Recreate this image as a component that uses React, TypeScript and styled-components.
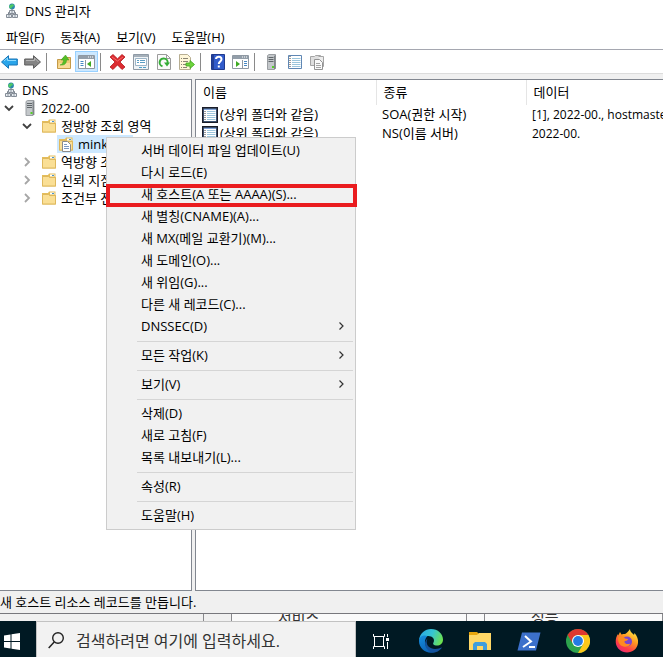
import React from "react";
import styled, { createGlobalStyle } from "styled-components";

const FONT = '"Open Sans", "Noto Sans CJK KR", sans-serif';

const GlobalStyle = createGlobalStyle`
  * { box-sizing: border-box; }
  body { margin: 0; background: #fff; }
  button, input { font: inherit; color: inherit; }
`;

const Screen = styled.div`
  position: relative;
  display: flex;
  flex-direction: column;
  min-height: 100vh;
  overflow: hidden;
  font-family: ${FONT};
  font-size: 13px;
  line-height: 18px;
  color: #000;
  white-space: nowrap;
`;

const TitleBar = styled.header`
  display: flex;
  align-items: center;
  gap: 6px;
  height: 24px;
  padding: 0 0 2px 5px;
`;

const Title = styled.h1`
  margin: 0;
  font-size: 13px;
  font-weight: 400;
`;

const MenuBar = styled.nav`
  display: flex;
  gap: 16px;
  height: 26px;
  padding: 0 6px;
  border-bottom: 1px solid #a5a7b0;
`;

const MenuBarItem = styled.button`
  padding: 0;
  border: 0;
  background: none;
`;

const Toolbar = styled.div`
  display: flex;
  align-items: center;
  height: 24px;
  margin-left: -2px;
  border-bottom: 1px solid #dcdcdc;
`;

const ToolButton = styled.button<{ $active?: boolean }>`
  display: flex;
  align-items: center;
  justify-content: center;
  width: 23px;
  height: 21px;
  padding: 0;
  border: 1px solid ${(p) => (p.$active ? "#99d1ff" : "transparent")};
  background: ${(p) => (p.$active ? "#cce8ff" : "none")};
`;

const ToolDivider = styled.span`
  width: 1px;
  height: 18px;
  margin: 0 5px 0 2px;
  background: #8a8a8a;
`;

const Workspace = styled.main`
  display: flex;
  flex: 1;
  gap: 3px;
  padding: 5px 0 0;
  background: #f0f0f0;
`;

const Pane = styled.section<{ $grow?: boolean }>`
  flex: ${(p) => (p.$grow ? "1" : "0 0 192px")};
  min-width: 0;
  overflow: hidden;
  border: 1px solid #828790;
  border-left-width: ${(p) => (p.$grow ? "1px" : "0")};
  border-right-width: ${(p) => (p.$grow ? "0" : "1px")};
  background: #fff;
`;

const Tree = styled.ul`
  margin: 0;
  padding: 1px 0 0 3px;
  list-style: none;
`;

const TreeRow = styled.li<{ $level: number }>`
  display: flex;
  align-items: center;
  height: 18px;
  padding-left: ${(p) => p.$level * 18}px;
`;

const Expander = styled.button`
  display: flex;
  align-items: center;
  width: 19px;
  height: 18px;
  padding: 0 0 0 1px;
  border: 0;
  background: none;
`;

const TreeLabel = styled.span<{ $selected?: boolean }>`
  display: flex;
  align-items: center;
  gap: 4px;
  height: 18px;
  padding: 0 ${(p) => (p.$selected ? "25px" : "2px")} 0 1px;
  background: ${(p) => (p.$selected ? "#cce8ff" : "none")};
`;

const RecordTable = styled.table`
  width: 100%;
  table-layout: fixed;
  border-collapse: collapse;
`;

const HeadCell = styled.th<{ $width?: number }>`
  width: ${(p) => (p.$width ? `${p.$width}px` : "auto")};
  height: 25px;
  padding: 0 7px 2px;
  border-right: ${(p) => (p.$width ? "1px solid #e5e5e5" : "0")};
  font-weight: 400;
  text-align: left;
`;

const Cell = styled.td<{ $small?: boolean }>`
  height: 19px;
  padding: 0 0 0 6px;
  font-size: ${(p) => (p.$small ? "12px" : "13px")};
  line-height: 19px;
`;

const NameCell = styled.div`
  display: flex;
  align-items: center;
  gap: 2px;
  height: 19px;
`;

const StatusBar = styled.footer`
  height: 23px;
  padding-top: 2px;
  border-bottom: 1px solid #77777c;
  background: #f0f0f0;
`;

const Backdrop = styled.div`
  display: grid;
  grid-template-columns: 204px 28px 235px 18px 1fr;
  height: 7px;
  overflow: hidden;
  background: #fafafa;
  font-size: 15px;
  line-height: 7px;
  color: #333;
`;

const BackdropCell = styled.div<{ $shade?: boolean }>`
  border-right: 1px solid #88888c;
  background: ${(p) => (p.$shade ? "#f0f0f0" : "none")};
`;

const BackdropText = styled.span`
  margin-left: 46px;
`;

const Taskbar = styled.div`
  display: flex;
  height: 36px;
  background: #001923;
`;

const StartButton = styled.button`
  display: flex;
  align-items: center;
  width: 36px;
  padding: 4px 0 0 4px;
  border: 0;
  background: none;
`;

const SearchBox = styled.label`
  display: flex;
  align-items: center;
  gap: 12px;
  flex: 0 0 320px;
  padding: 2px 12px 0 11px;
  border: 1px solid #c2c2c2;
  border-bottom: 0;
  background: #f2f2f2;
`;

const SearchInput = styled.input`
  flex: 1;
  min-width: 0;
  padding: 0;
  border: 0;
  outline: 0;
  background: none;
  font-size: 16px;
  line-height: 24px;
  &::placeholder { color: #333; opacity: 1; }
`;

const TaskButton = styled.button`
  display: flex;
  align-items: center;
  justify-content: center;
  width: 49px;
  padding: 4px 0 0 2px;
  border: 0;
  background: none;
`;

const ContextMenu = styled.div`
  position: absolute;
  top: 137px;
  left: 106px;
  width: 250px;
  padding: 2px 0;
  border: 1px solid #ccc;
  background: #f1f1f1;
`;

const ContextItem = styled.button<{ $marked?: boolean }>`
  position: relative;
  display: flex;
  align-items: center;
  justify-content: space-between;
  width: 100%;
  height: 22px;
  padding: 0 10px 2px 34px;
  border: 0;
  background: none;
  ${(p) =>
    p.$marked &&
    `&::after {
      content: "";
      position: absolute;
      inset: 0 -2px -1px -1px;
      border: 4px solid #ea1c1f;
    }`}
`;

const ContextDivider = styled.hr`
  height: 1px;
  margin: 3px 2px 3px 30px;
  border: 0;
  background: #d5d5d5;
`;

const DnsIcon = () => (
  <svg width="14" height="16" viewBox="0 0 14 16">
    <circle cx="7" cy="3.5" r="2.9" fill="#2b87ad" />
    <path d="M5 2l3-1 1 2-2 1-1 2-2-2z" fill="#4fca63" />
    <path d="M7 6v5M3.500 12V9.500h7V12" stroke="#78818c" fill="none" />
    <path d="M4.500 7.500h5v3h-5zM1.500 11.500h5v3h-5zM7.500 11.500h5v3h-5z" fill="#e6ebf0" stroke="#858d97" />
    <path d="M6 9h2M3 13h2M9 13h2" stroke="#8f98a1" />
  </svg>
);

const ServerIcon = ({ wide = false }: { wide?: boolean }) => (
  <svg width={wide ? 14 : 9} height="16" viewBox="0 0 9 16">
    <path d="M.5 1.500L2 .5h6.500v14l-1 1h-7z" fill="#c3c7ca" stroke="#9a9ea2" />
    <path d="M7 2v13h1.500V1z" fill="#7f8488" />
    <path d="M1.500 3.500h5M1.500 5.500h5M1.500 7.500h5" stroke="#5f6569" />
    <path d="M5 12h2v2H5z" fill="#55cf27" />
  </svg>
);

const FolderIcon = ({ page = false }: { page?: boolean }) => (
  <svg width="16" height="16" viewBox="0 0 16 16">
    <path d="M1 3h6l1-1.500h6.500V5H15v9.500H1z" fill="#e4bd5b" />
    <path d="M9 2.500h4.500v2H9z" fill="#fff" />
    <path d="M11 3h2v1h-2z" fill="#4795d2" />
    <path d="M1.500 4.500h6l1 1h6v8.500h-13z" fill="#fadf95" stroke="#dfb85c" />
    {page && (
      <>
        <path d="M4.500 5.500h5l3 3v7h-8z" fill="#fff" stroke="#8b8b8b" />
        <path d="M6 8.500h3M6 10.500h5M6 12.500h5" stroke="#7d99bf" />
      </>
    )}
  </svg>
);

const NotebookIcon = ({ framed = false }: { framed?: boolean }) => (
  <svg width="16" height="16" viewBox="0 0 16 16">
    <path d="M1.500 1.500h13v13h-13z" fill="#fff" stroke="#5f87b4" />
    <path d="M5 4.500h8.500M5 6.500h8.500M5 8.500h8.500M5 10.500h8.500M5 12.500h8.500" stroke="#9cc6dc" />
    <path d="M3 2v12" stroke="#9a9a9a" strokeWidth="2" strokeDasharray="1 1" />
    {framed && <path d="M.75 .75h14.500v14.500H.75z" fill="none" stroke="#1a1c28" strokeWidth="1.500" />}
    {framed && <path d="M2 2.500h12" stroke="#83a3d9" />}
  </svg>
);

const Chevron = ({ open = false }: { open?: boolean }) => (
  <svg width="10" height="10" viewBox="0 0 10 10">
    <path
      d={open ? "M1 3l4 4 4-4" : "M3 1l4 4-4 4"}
      fill="none"
      stroke={open ? "#404040" : "#a6a6a6"}
      strokeWidth="1.800"
    />
  </svg>
);

const SubmenuArrow = () => (
  <svg width="8" height="8" viewBox="0 0 8 8">
    <path d="M2.500 .5L6 4 2.500 7.500" fill="none" stroke="#333" strokeWidth="1.200" />
  </svg>
);

const Arrow = ({ forward = false }: { forward?: boolean }) => (
  <svg width="17" height="14" viewBox="0 0 17 14">
    <path
      d={forward ? "M16.500 7L9.500 .7V4H.7v6h8.800v3.300z" : "M.5 7l7-6.300V4h8.800v6H7.500v3.300z"}
      fill={forward ? "#858585" : "#2aa5ea"}
      stroke={forward ? "#5d5d5d" : "#1775b7"}
    />
    <path d={forward ? "M2 5.500h8.500V3l4 4" : "M3 6l3.500-3v2.500H15"} fill="none" stroke={forward ? "#b6b6b6" : "#8fdcff"} />
  </svg>
);

const UpFolderIcon = () => (
  <svg width="16" height="16" viewBox="0 0 16 16">
    <path d="M1.500 5.500h5l1-2h7v11h-13z" fill="#f0cb78" stroke="#c49a48" />
    <path d="M2 14l1-5h11v5z" fill="#f9dc98" />
    <path d="M4 11C6.500 10 7.500 8.500 7.500 6H5l4.500-5L13 6h-2.500c0 4-2.500 5.500-6.500 5z" fill="#55be26" stroke="#3c9a1c" strokeWidth=".5" />
  </svg>
);

const TreePanelIcon = ({ right = false }: { right?: boolean }) => (
  <svg width="17" height="14" viewBox="0 0 17 14">
    <path d="M.5 .5h16v13H.5z" fill="#fff" stroke="#8f99a3" />
    <path d="M1 1h15v3H1z" fill="#939ea9" />
    <path d="M10 2h1M12 2h1M14 2h1" stroke="#fff" />
    <path d={right ? "M10.500 5v8" : "M7.500 5v8"} stroke="#8f99a3" />
    <path d={right ? "M12 6.500h3M12 8.500h3M12 10.500h3" : "M2.500 6.500h3M2.500 8.500h3M2.500 10.500h3"} stroke="#4789c4" />
    <path d={right ? "M4 6l4 3-4 3z" : "M13 6L9 9l4 3z"} fill="#3daa22" />
  </svg>
);

const DeleteIcon = () => (
  <svg width="17" height="16" viewBox="0 0 17 16">
    <path
      d="M1 3l3-2.500 4.500 4.300L13 .5 16 3l-5 5 5 5-3 2.500-4.500-4.600L4 15.500 1 13l5-5z"
      fill="#dd2c31"
      stroke="#b31c20"
      strokeWidth=".8"
    />
    <path d="M3 3l5.500 4L14 3" stroke="#f36d6b" fill="none" />
  </svg>
);

const PropertiesIcon = () => (
  <svg width="16" height="16" viewBox="0 0 16 16">
    <path d="M.5 .5h15v15H.5z" fill="#eff3f6" stroke="#8f9aa5" />
    <path d="M1 1h14v2H1z" fill="#a5b0ba" />
    <path d="M2.500 4.500h11v7h-11z" fill="#fff" stroke="#9db5c7" />
    <path d="M4 6.500h2M7 6.500h5M4 8.500h2M7 8.500h5" stroke="#5a9dc4" />
    <path d="M6 13.500h3M10 13.500h3" stroke="#4ca0cb" />
  </svg>
);

const RefreshIcon = () => (
  <svg width="14" height="16" viewBox="0 0 14 16">
    <path d="M.5.5h9l4 4v11H.5z" fill="#fbfbfb" stroke="#9b9b9b" />
    <path d="M9.500.5v4h4" fill="none" stroke="#9b9b9b" />
    <path d="M5.500 12.300A4 4 0 1 1 10.500 9.500" fill="none" stroke="#35ad37" strokeWidth="2" />
    <path d="M7 8.500h6l-3 4z" fill="#35ad37" />
  </svg>
);

const ExportIcon = () => (
  <svg width="17" height="16" viewBox="0 0 17 16">
    <path d="M1.500.5h8l3 3v12h-11z" fill="#fff7d9" stroke="#b7ae92" />
    <path d="M3 4.500h1M5 4.500h5M3 7.500h1M5 7.500h5M3 10.500h1M5 10.500h4M3 13.500h1M5 13.500h4" stroke="#8a8473" />
    <path d="M8 9h4V6.500l4.500 4-4.500 4V12H8z" fill="#6ed53c" stroke="#3fa51f" strokeWidth=".8" />
  </svg>
);

const HelpIcon = () => (
  <svg width="14" height="16" viewBox="0 0 14 16">
    <path d="M.5.5h13v15H.5z" fill="#315bcb" stroke="#203a8e" />
    <path d="M1 1h2v14H1z" fill="#233f97" />
    <path d="M5 5c0-3 5.500-3 5.500.2C10.500 7.500 7.800 7.500 7.800 10" fill="none" stroke="#fff" strokeWidth="2" />
    <path d="M6.800 11.500h2v2h-2z" fill="#fff" />
  </svg>
);

const CopyIcon = () => (
  <svg width="15" height="16" viewBox="0 0 15 16">
    <path d="M.5 2.500h4l1-1h5v10H.5z" fill="#dedede" stroke="#a5a5a5" />
    <path d="M8.500 2.500h5v10h-3" fill="#ededed" stroke="#a5a5a5" />
    <path d="M4.500 5.500h5l3 3v7h-8z" fill="#fafafa" stroke="#929292" />
    <path d="M6 9.500h4M6 11.500h5M6 13.500h5" stroke="#a5a5a5" />
  </svg>
);

const WindowsIcon = () => (
  <svg width="16" height="17" viewBox="0 0 16 17">
    <path d="M0 2.500l6.500-1V8H0zM7.500 1.300L16 0v8H7.500zM0 9h6.500v6.500l-6.500-1zM7.500 9H16v8l-8.500-1.300z" fill="#fff" />
  </svg>
);

const SearchIcon = () => (
  <svg width="16" height="17" viewBox="0 0 16 17">
    <circle cx="10" cy="6" r="5.300" fill="none" stroke="#222" strokeWidth="1.400" />
    <path d="M6.200 10L.7 16" stroke="#222" strokeWidth="1.500" />
  </svg>
);

const TaskViewIcon = () => (
  <svg width="17" height="17" viewBox="0 0 17 17">
    <path d="M.5 1v2.500h11V1M.5 16v-2.500h11V16M1.500 3.500v10M10.500 3.500v10" fill="none" stroke="#fff" />
    <path d="M14.500 1v3M14.500 9v7" stroke="#fff" />
    <path d="M13 5h3v3h-3z" fill="#fff" />
  </svg>
);

const EdgeIcon = () => (
  <svg width="24" height="24" viewBox="0 0 24 24">
    <defs>
      <linearGradient id="edgeTop" x1="0" y1=".3" x2="1" y2=".6">
        <stop offset="0" stopColor="#2aa9e4" />
        <stop offset=".5" stopColor="#36c5d2" />
        <stop offset="1" stopColor="#6ee34d" />
      </linearGradient>
      <linearGradient id="edgeBase" x1="0" y1="0" x2=".5" y2="1">
        <stop offset="0" stopColor="#168fdf" />
        <stop offset="1" stopColor="#0b62b6" />
      </linearGradient>
    </defs>
    <path d="M0 11C1 4 6 0 12 0c7 0 12 5 12 10.500 0 4-3 6-6 6-3.500 0-4.500-1.500-3.500-3 2-4-2-7-6-6.500C4 7 1.500 9 0 11z" fill="url(#edgeTop)" />
    <path d="M0 12c0-5 5-6.500 8.500-5C6 9.500 5 13 7 17c2 4 6 6.500 9.500 6C8 26 0 20 0 12z" fill="url(#edgeBase)" />
    <path d="M8.500 9.500C6 14 9 20 16 20c3 0 5-1 6.300-1.500.5 0 .5.300.2.800C19 24 13 24.500 10 22c-5-4-5-9-1.500-12.500z" fill="#14539e" />
  </svg>
);

const ExplorerIcon = () => (
  <svg width="22" height="19" viewBox="0 0 22 19">
    <path d="M0 0h8l2 2h12v16H0z" fill="#e8a50c" />
    <path d="M0 3h8l2-2h12v17H0z" fill="#ffd766" />
    <path d="M4 18v-6l2-2h10l2 2v6h-4v-4H8v4z" fill="#3f9ddd" />
  </svg>
);

const PowerShellIcon = () => (
  <svg width="24" height="19" viewBox="0 0 24 19">
    <path d="M5 .5h18.500L19 18.500H.5z" fill="#3c70cb" />
    <path d="M8 4l6 5.500-8 5.500M12 15h6" fill="none" stroke="#fff" strokeWidth="2" />
  </svg>
);

const ChromeIcon = () => (
  <svg width="24" height="24" viewBox="0 0 24 24">
    <circle cx="12" cy="12" r="12" fill="#2da34d" />
    <path d="M12 6h10.400A12 12 0 0 1 12 24l5.200-9z" fill="#fbc71a" />
    <path d="M1.600 6A12 12 0 0 1 22.400 6H12a6 6 0 0 0-5.600 8z" fill="#df382f" />
    <circle cx="12" cy="12" r="6" fill="#fff" />
    <circle cx="12" cy="12" r="4.900" fill="#247be5" />
  </svg>
);

const FirefoxIcon = () => (
  <svg width="24" height="24" viewBox="0 0 24 24">
    <defs>
      <linearGradient id="foxFire" x1=".8" y1="0" x2=".2" y2="1">
        <stop offset="0" stopColor="#fff04b" />
        <stop offset=".4" stopColor="#ff9a20" />
        <stop offset=".75" stopColor="#ff3b47" />
        <stop offset="1" stopColor="#e12b7d" />
      </linearGradient>
    </defs>
    <path d="M5 3l1.500 2.500C7.500 5 9 5 10 5c1-.5 3-2 5-5 0 3 2.500 4 4 6l.5-2C22 7 23.500 10 23 14c-.8 6-5.500 9.500-11 9.500S1.500 19.500.8 14C.4 10 1.500 7 3 5l.2 1.500z" fill="url(#foxFire)" />
    <circle cx="12" cy="12.500" r="5" fill="#7946cf" />
    <path d="M3 8.500c3-1.500 6-.5 7 1l3 .5c0 2-3 1.500-3.500 2.500-.5 2 3 3.500 6 2-1 2.500-4 4-7 3-4-1-5.500-4-5.500-9z" fill="#ff8a20" />
  </svg>
);

const menus = ["파일(F)", "동작(A)", "보기(V)", "도움말(H)"];

const toolGroups: { label: string; icon: React.ReactNode; active?: boolean }[][] = [
  [
    { label: "뒤로", icon: <Arrow /> },
    { label: "앞으로", icon: <Arrow forward /> },
  ],
  [
    { label: "한 수준 위로", icon: <UpFolderIcon /> },
    { label: "콘솔 트리", icon: <TreePanelIcon />, active: true },
  ],
  [
    { label: "삭제", icon: <DeleteIcon /> },
    { label: "속성", icon: <PropertiesIcon /> },
    { label: "새로 고침", icon: <RefreshIcon /> },
    { label: "목록 내보내기", icon: <ExportIcon /> },
  ],
  [
    { label: "도움말", icon: <HelpIcon /> },
    { label: "작업 창", icon: <TreePanelIcon right /> },
  ],
  [
    { label: "서버", icon: <ServerIcon /> },
    { label: "레코드", icon: <NotebookIcon /> },
    { label: "복사", icon: <CopyIcon /> },
  ],
];

type TreeNode = {
  level: number;
  label: string;
  icon: React.ReactNode;
  open?: boolean;
  selected?: boolean;
};

const tree: TreeNode[] = [
  { level: 0, label: "DNS", icon: <DnsIcon /> },
  { level: 0, label: "2022-00", icon: <ServerIcon wide />, open: true },
  { level: 1, label: "정방향 조회 영역", icon: <FolderIcon />, open: true },
  { level: 3, label: "mink", icon: <FolderIcon page />, selected: true },
  { level: 1, label: "역방향 조회 영역", icon: <FolderIcon />, open: false },
  { level: 1, label: "신뢰 지점", icon: <FolderIcon />, open: false },
  { level: 1, label: "조건부 전달자", icon: <FolderIcon />, open: false },
];

const records = [
  ["(상위 폴더와 같음)", "SOA(권한 시작)", "[1], 2022-00., hostmaste"],
  ["(상위 폴더와 같음)", "NS(이름 서버)", "2022-00."],
];

type MenuEntry = { label: string; submenu?: boolean; marked?: boolean };

const contextGroups: MenuEntry[][] = [
  [
    { label: "서버 데이터 파일 업데이트(U)" },
    { label: "다시 로드(E)" },
    { label: "새 호스트(A 또는 AAAA)(S)...", marked: true },
    { label: "새 별칭(CNAME)(A)..." },
    { label: "새 MX(메일 교환기)(M)..." },
    { label: "새 도메인(O)..." },
    { label: "새 위임(G)..." },
    { label: "다른 새 레코드(C)..." },
    { label: "DNSSEC(D)", submenu: true },
  ],
  [{ label: "모든 작업(K)", submenu: true }],
  [{ label: "보기(V)", submenu: true }],
  [{ label: "삭제(D)" }, { label: "새로 고침(F)" }, { label: "목록 내보내기(L)..." }],
  [{ label: "속성(R)" }],
  [{ label: "도움말(H)" }],
];

const taskButtons = [
  { label: "작업 보기", icon: <TaskViewIcon /> },
  { label: "Microsoft Edge", icon: <EdgeIcon /> },
  { label: "파일 탐색기", icon: <ExplorerIcon /> },
  { label: "PowerShell", icon: <PowerShellIcon /> },
  { label: "Chrome", icon: <ChromeIcon /> },
  { label: "Firefox", icon: <FirefoxIcon /> },
];

export default function App() {
  return (
    <Screen>
      <GlobalStyle />
      <TitleBar>
        <DnsIcon />
        <Title>DNS 관리자</Title>
      </TitleBar>
      <MenuBar>
        {menus.map((m) => (
          <MenuBarItem key={m}>{m}</MenuBarItem>
        ))}
      </MenuBar>
      <Toolbar>
        {toolGroups.map((group, i) => (
          <React.Fragment key={i}>
            {i > 0 && <ToolDivider />}
            {group.map((t) => (
              <ToolButton key={t.label} aria-label={t.label} $active={t.active}>
                {t.icon}
              </ToolButton>
            ))}
          </React.Fragment>
        ))}
      </Toolbar>
      <Workspace>
        <Pane>
          <Tree>
            {tree.map((n) => (
              <TreeRow key={n.label} $level={n.level}>
                {n.open !== undefined && (
                  <Expander aria-label={n.label} aria-expanded={n.open}>
                    <Chevron open={n.open} />
                  </Expander>
                )}
                <TreeLabel $selected={n.selected}>
                  {n.icon}
                  {n.label}
                </TreeLabel>
              </TreeRow>
            ))}
          </Tree>
        </Pane>
        <Pane $grow>
          <RecordTable>
            <thead>
              <tr>
                <HeadCell $width={180}>이름</HeadCell>
                <HeadCell $width={150}>종류</HeadCell>
                <HeadCell>데이터</HeadCell>
              </tr>
            </thead>
            <tbody>
              {records.map(([name, type, data]) => (
                <tr key={type}>
                  <Cell>
                    <NameCell>
                      <NotebookIcon framed />
                      {name}
                    </NameCell>
                  </Cell>
                  <Cell>{type}</Cell>
                  <Cell $small>{data}</Cell>
                </tr>
              ))}
            </tbody>
          </RecordTable>
        </Pane>
      </Workspace>
      <StatusBar>새 호스트 리소스 레코드를 만듭니다.</StatusBar>
      <Backdrop>
        <BackdropCell $shade />
        <BackdropCell $shade />
        <BackdropCell>
          <BackdropText>서비스</BackdropText>
        </BackdropCell>
        <BackdropCell />
        <BackdropCell>
          <BackdropText>성능</BackdropText>
        </BackdropCell>
      </Backdrop>
      <Taskbar>
        <StartButton aria-label="시작">
          <WindowsIcon />
        </StartButton>
        <SearchBox>
          <SearchIcon />
          <SearchInput aria-label="검색" placeholder="검색하려면 여기에 입력하세요." />
        </SearchBox>
        {taskButtons.map((t) => (
          <TaskButton key={t.label} aria-label={t.label}>
            {t.icon}
          </TaskButton>
        ))}
      </Taskbar>
      <ContextMenu role="menu">
        {contextGroups.map((group, i) => (
          <React.Fragment key={i}>
            {i > 0 && <ContextDivider />}
            {group.map((item) => (
              <ContextItem key={item.label} role="menuitem" $marked={item.marked}>
                {item.label}
                {item.submenu && <SubmenuArrow />}
              </ContextItem>
            ))}
          </React.Fragment>
        ))}
      </ContextMenu>
    </Screen>
  );
}
